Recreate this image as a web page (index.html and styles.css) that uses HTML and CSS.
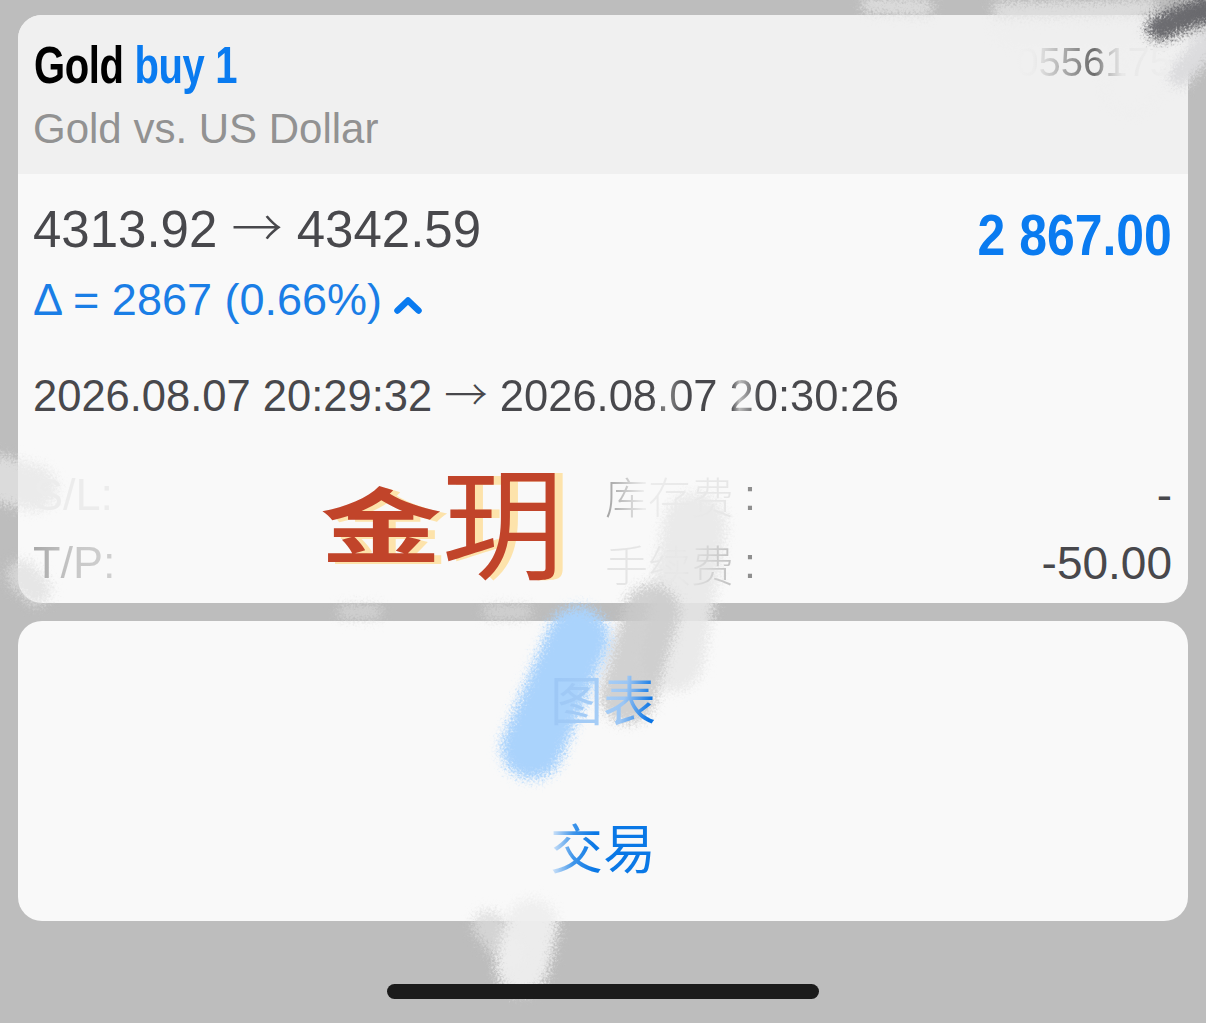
FILE: index.html
```html
<!DOCTYPE html>
<html lang="zh">
<head>
<meta charset="utf-8">
<title>Gold buy 1</title>
<link rel="stylesheet" href="styles.css">
</head>
<body>
<main class="screen">
  <section class="card">
    <header class="head">
      <div class="head-top">
        <h1 class="title">Gold <span class="blue">buy 1</span></h1>
        <span class="ticket">0556175</span>
      </div>
      <p class="subtitle">Gold vs. US Dollar</p>
    </header>
    <div class="body">
      <div class="price-row">
        <span class="prices">4313.92 <span class="arr">→</span> 4342.59</span>
        <span class="amount">2 867.00</span>
      </div>
      <div class="delta">
        <span>Δ = 2867 (0.66%)</span>
        <svg class="chevron" viewBox="0 0 28 18" aria-hidden="true"><path d="M3.5 14.5 14 4.500l10.500 10" /></svg>
      </div>
      <p class="dates">2026.08.07 20:29:32 <span class="arr">→</span> <span class="date-end">2026.08.07 20:30:26</span></p>
      <div class="details">
        <div class="detail"><span class="label label-sl">S/L:</span></div>
        <div class="detail"><span class="label cjk label-swap">库存费</span><span class="colon">:</span><span class="value">-</span></div>
        <div class="detail"><span class="label label-tp">T/P:</span></div>
        <div class="detail"><span class="label cjk label-fee">手续费</span><span class="colon">:</span><span class="value">-50.00</span></div>
      </div>
    </div>
  </section>
  <nav class="actions">
    <div class="action"><span class="action-text chart">图表</span></div>
    <div class="action"><span class="action-text trade">交易</span></div>
  </nav>
  <div class="home-wrap"><div class="home-bar"></div></div>

  <svg class="smudges" viewBox="0 0 1206 1023" aria-hidden="true">
    <defs>
      <filter id="rough" x="-40%" y="-40%" width="180%" height="180%">
        <feGaussianBlur in="SourceGraphic" stdDeviation="5" result="b"/>
        <feTurbulence type="fractalNoise" baseFrequency="0.45" numOctaves="2" seed="7" result="n"/>
        <feDisplacementMap in="b" in2="n" scale="20" xChannelSelector="R" yChannelSelector="G"/>
      </filter>
    </defs>
    <g filter="url(#rough)" fill="none" stroke-linecap="round">
      <path class="s-top" d="M870 5 925 8M1000 10 1150 8" stroke-width="16"/>
      <path class="s-wash" d="M1010 30 1130 30" stroke-width="26"/>
      <path class="s-light" d="M1185 40 1130 88" stroke-width="50"/>
      <path class="s-band" d="M1206 45 1180 75" stroke-width="24"/>
      <path class="s-dark" d="M1160 28 1206 10" stroke-width="28"/>
      <path class="s-left" d="M-4 478 34 488" stroke-width="46"/>
      <path class="s-left2" d="M22 575 36 590" stroke-width="30"/>
      <path class="s-gap" d="M345 612 375 612M490 612 525 612" stroke-width="14"/>
      <path class="s-pale" d="M695 525 672 660" stroke-width="64"/>
      <path class="s-gray" d="M652 612 628 695" stroke-width="56"/>
      <path class="s-blue" d="M578 638 532 748" stroke-width="62"/>
      <path class="s-bottom2" d="M488 925 510 955" stroke-width="30"/>
      <path class="s-bottom" d="M532 925 522 968" stroke-width="52"/>
    </g>
  </svg>

  <div class="stamp"><span class="stamp-a">金</span><span class="stamp-b">玥</span></div>
</main>
</body>
</html>
```

FILE: styles.css
```css
* { box-sizing: border-box; margin: 0; padding: 0; }
html, body { height: 100%; }
body {
  background: #bdbdbd;
  font-family: "Liberation Sans", Arial, sans-serif;
  overflow: hidden;
}
.screen {
  position: relative;
  width: 1206px;
  height: 1023px;
  padding: 15px 18px 0;
  overflow: hidden;
}
.card { height: 588px; background: #f9f9f9; border-radius: 24px; overflow: hidden; }
.head { height: 159px; background: #f0f0f0; padding: 20px 16px 0 15px; }
.head-top { display: flex; justify-content: space-between; align-items: flex-start; height: 70px; }
.title {
  display: inline-block;
  margin-left: 1px;
  font-size: 52px;
  line-height: 60px;
  font-weight: 700;
  letter-spacing: -.5px;
  color: #000;
  white-space: nowrap;
  transform: scaleX(.77);
  transform-origin: left center;
}
.blue { color: #0a7bf0; }
.ticket {
  font-size: 40px;
  line-height: 54px;
  background: linear-gradient(90deg, #f0f0f0 0, #ececec 12%, #c4c4c4 24%, #6a6a6a 50%, #b8b8b8 58%, #e8e8e8 68%, #eeeeee 100%);
  -webkit-background-clip: text;
  background-clip: text;
  color: transparent;
  position: relative;
  z-index: 2;
}
.subtitle { font-size: 42px; line-height: 48px; color: #929292; }
.body { padding: 26px 16px 0 15px; }
.price-row { display: flex; justify-content: space-between; align-items: flex-start; height: 73px; }
.prices { font-size: 51px; line-height: 60px; color: #48484c; }
.arr { font-family: "Noto Sans CJK SC", sans-serif; font-weight: 300; line-height: 0; }
.amount {
  display: inline-block;
  font-size: 58px;
  line-height: 70px;
  font-weight: 700;
  color: #0a7bf0;
  white-space: nowrap;
  transform: scaleX(.86);
  transform-origin: right center;
}
.delta { display: flex; align-items: center; gap: 12px; height: 54px; font-size: 45px; color: #1a7ee6; }
.chevron { width: 28px; height: 18px; margin-top: 10px; }
.chevron path { fill: none; stroke: #0a7bf0; stroke-width: 6.500; stroke-linecap: round; stroke-linejoin: round; }
.dates { margin-top: 42px; font-size: 43.500px; line-height: 54px; color: #48484c; }
.date-end { background: linear-gradient(90deg, #48484c 0, #48484c 38%, #8a8a8a 42%, #48484c 46%, #48484c 58%, #bcbcbc 60%, #48484c 65%); -webkit-background-clip: text; background-clip: text; color: transparent; }
.details {
  display: grid;
  grid-template-columns: 572px 567px;
  grid-auto-rows: 68px;
  margin-top: 38px;
  align-items: center;
}
.detail { display: flex; align-items: center; }
.label {
  font-size: 45px;
  line-height: 60px;
  color: #d8d8d8;
  position: relative;
  z-index: 2;
}
.label-sl { color: #ececec; }
.label-tp { background: linear-gradient(90deg, #a8a8a8 0, #c8c8c8 50%, #d0d0d0 100%); -webkit-background-clip: text; background-clip: text; color: transparent; }
.cjk { font-family: "Noto Sans CJK SC", sans-serif; font-weight: 300; font-size: 43px; }
.label-swap { background: linear-gradient(90deg, #a0a0a0 0, #ececec 30%, #e6e6e6 100%); -webkit-background-clip: text; background-clip: text; color: transparent; }
.label-fee { background: linear-gradient(90deg, #e4e4e4 0, #e8e8e8 60%, #c0c0c0 100%); -webkit-background-clip: text; background-clip: text; color: transparent; }
.colon { font-size: 43px; line-height: 60px; color: #8f8f8f; margin-left: 10px; position: relative; z-index: 2; }
.value { margin-left: auto; font-size: 46px; line-height: 60px; color: #48484c; }
.actions { height: 300px; margin-top: 18px; background: #f9f9f9; border-radius: 24px; display: grid; grid-template-rows: 150px 150px; overflow: hidden; }
.action { display: flex; align-items: center; justify-content: center; }
.action-text {
  font-family: "Noto Sans CJK SC", sans-serif;
  font-size: 53px;
  line-height: 70px;
  -webkit-background-clip: text;
  background-clip: text;
  color: transparent;
  position: relative;
  z-index: 2;
}
.chart { background-image: linear-gradient(100deg, #9cc7f6 0, #a6cdf6 50%, #9cc6f4 68%, #0a74e4 92%); margin-top: 4px; }
.trade { background-image: linear-gradient(90deg, #e0ecfa 0, #3f95ea 22%, #0a78e6 42%); }
.home-wrap { margin-top: 63px; display: flex; justify-content: center; }
.home-bar { width: 432px; height: 15px; border-radius: 8px; background: #1b1b1b; position: relative; z-index: 2; }
.smudges { position: absolute; inset: 0; width: 1206px; height: 1023px; pointer-events: none; }
.s-light { stroke: #f0f0f0; opacity: .9; }
.s-wash { stroke: #eeeeee; opacity: .6; }
.s-top { stroke: #e2e2e2; opacity: .85; }
.s-band { stroke: #dcdcde; }
.s-dark { stroke: #646468; opacity: .95; }
.s-left { stroke: #e6e6e6; opacity: .75; }
.s-left2 { stroke: #dedede; opacity: .7; }
.s-gap { stroke: #dcdcdc; opacity: .65; }
.s-pale { stroke: #e8e8e8; opacity: .85; }
.s-gray { stroke: #cacaca; opacity: .85; }
.s-blue { stroke: #aad3fc; }
.s-bottom { stroke: #eeeeee; opacity: .95; }
.s-bottom2 { stroke: #dcdcdc; opacity: .75; }
.stamp {
  position: absolute;
  left: 320px;
  top: 452px;
  display: flex;
  align-items: center;
  font-family: "Noto Sans CJK SC", sans-serif;
  color: #c1442a;
}
.stamp-a {
  font-size: 122px;
  line-height: 130px;
  font-weight: 700;
  text-shadow: 7px 3px 0 #fde3ab;
  transform: translateY(4px) scaleY(.66);
}
.stamp-b { font-size: 122px; line-height: 130px; font-weight: 400; text-shadow: 8px 0 0 #fde3ab; }
```
